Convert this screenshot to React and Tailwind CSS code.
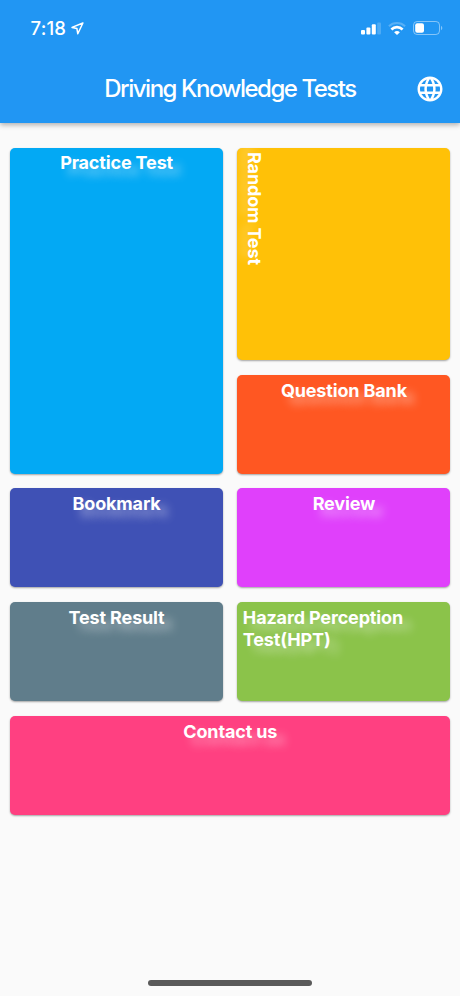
import { MdLanguage } from "react-icons/md";

const cardBase =
  "flex rounded-[5px] pl-[5.5px] pr-[5px] shadow-[0_1px_2px_rgba(0,0,0,0.35)]";

const labelBase =
  "text-[18px] leading-[22px] font-bold tracking-[-0.15px] text-white [text-shadow:8px_7px_10px_rgba(255,255,255,0.45)]";

const cards = [
  { title: "Bookmark", color: "bg-[#3f51b5]" },
  { title: "Review", color: "bg-[#e040fb]" },
  { title: "Test Result", color: "bg-[#607d8b]" },
  { title: "Hazard Perception Test(HPT)", color: "bg-[#8bc34a]" },
];

const Card = ({ title, color, className = "pt-[5px]" }) => (
  <button
    type="button"
    className={`${cardBase} items-start justify-center text-left ${color} ${className}`}
  >
    <span className={labelBase}>{title}</span>
  </button>
);

const StatusBar = () => (
  <div className="flex h-[56px] items-center justify-between pl-[30.5px] pr-[17px]">
    <div className="flex items-center gap-[5px]">
      <span className="text-[18.5px] leading-[22px] font-medium tracking-[0.2px]">
        7:18
      </span>
      <svg width="13" height="13" viewBox="0 0 13 13" fill="none">
        <path
          d="M11.9 1 1 5.4l4.9 1.1.9 5.3z"
          stroke="white"
          strokeWidth="1.5"
          strokeLinejoin="round"
        />
      </svg>
    </div>

    <div className="flex items-center">
      {/* Signal */}
      <svg width="20" height="13" viewBox="0 0 20 13" fill="white">
        <rect x="0" y="8" width="4" height="4.6" rx="1" />
        <rect x="5.4" y="5.5" width="4" height="7.1" rx="1" />
        <rect x="10.8" y="2.3" width="4" height="10.3" rx="1" />
        <rect x="16.2" y="0.5" width="3.8" height="12.1" rx="1" opacity="0.2" />
      </svg>

      {/* Wifi */}
      <svg
        className="ml-[7px]"
        width="18"
        height="13"
        viewBox="0 0 18 13"
        fill="none"
        stroke="white"
      >
        <path d="M.9 4.3a11.8 11.8 0 0 1 16.2 0" strokeWidth="2" opacity="0.25" />
        <path d="M3.4 7.5a7.9 7.9 0 0 1 11.2 0" strokeWidth="2.6" />
        <path d="M9 13 6.1 10.2a4.3 4.3 0 0 1 5.8 0z" fill="white" stroke="none" />
      </svg>

      {/* Battery */}
      <svg className="ml-[7px]" width="30" height="14" viewBox="0 0 30 14">
        <rect
          x="0.5"
          y="0.5"
          width="26"
          height="13"
          rx="3.6"
          fill="none"
          stroke="white"
          strokeOpacity="0.45"
        />
        <rect x="2.2" y="2.2" width="8.8" height="9.6" rx="2" fill="white" />
        <path d="M28 4.8c1.8.8 1.8 3.6 0 4.4z" fill="white" opacity="0.45" />
      </svg>
    </div>
  </div>
);

const App = () => {
  return (
    <div className="flex h-[996px] w-[460px] flex-col bg-[#fafafa] font-['Inter',sans-serif]">
      <header className="h-[123px] bg-[#2196f3] text-white shadow-[0_2px_5px_rgba(0,0,0,0.3)]">
        <StatusBar />
        <div className="grid h-[65px] grid-cols-[60px_1fr_60px] items-center">
          <h1 className="col-start-2 text-center text-[24px] leading-[30px] font-medium tracking-[-1.48px] whitespace-nowrap">
            Driving Knowledge Tests
          </h1>
          <button type="button" className="flex justify-center">
            <MdLanguage size={30} />
          </button>
        </div>
      </header>

      <main className="flex flex-1 flex-col gap-[14.7px] px-[10px] pt-[24.5px]">
        <div className="grid grid-cols-2 gap-[14.7px]">
          <Card
            title="Practice Test"
            color="bg-[#03a9f4]"
            className="pt-[4.4px]"
          />
          <div className="flex flex-col gap-[14.7px]">
            {/* Label runs top to bottom */}
            <button
              type="button"
              className={`${cardBase} h-[212.6px] items-start bg-[#ffc107] pt-[4.5px]`}
            >
              <span className="text-[18px] leading-[22px] font-bold tracking-[-0.15px] text-white [writing-mode:vertical-rl] [text-shadow:-7px_8px_10px_rgba(255,255,255,0.3)]">
                Random Test
              </span>
            </button>
            <Card
              title="Question Bank"
              color="bg-[#ff5722]"
              className="h-[99px] pt-[5px]"
            />
          </div>
        </div>

        <div className="grid grid-cols-2 gap-[14.7px]">
          {cards.map((card) => (
            <Card key={card.title} {...card} className="h-[99px] pt-[5px]" />
          ))}
        </div>

        <Card
          title="Contact us"
          color="bg-[#ff4081]"
          className="h-[99px] pt-[5px]"
        />
      </main>

      {/* Home indicator */}
      <div className="flex justify-center pb-[10px]">
        <div className="h-[6px] w-[164px] rounded-full bg-[#5a5a5a]" />
      </div>
    </div>
  );
};

export default App;
